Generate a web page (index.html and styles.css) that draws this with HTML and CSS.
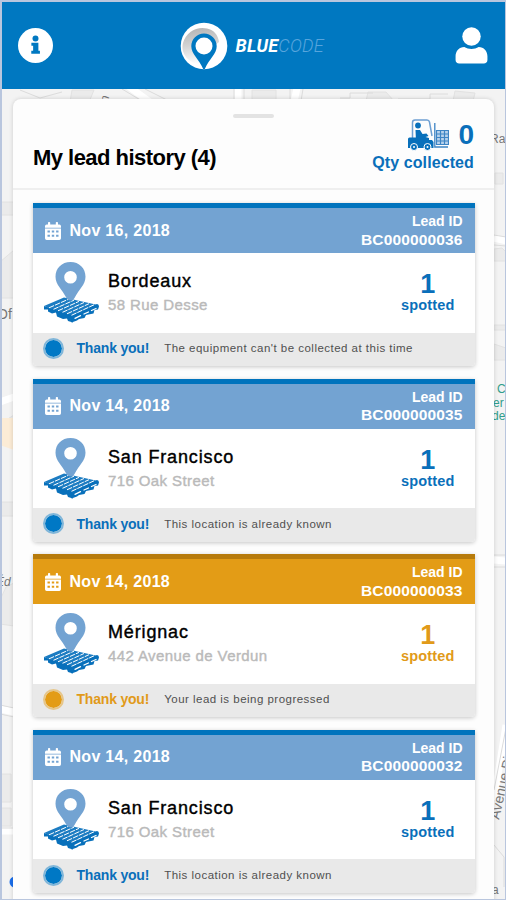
FILE: index.html
```html
<!DOCTYPE html>
<html lang="en">
<head>
<meta charset="utf-8">
<title>Bluecode</title>
<link rel="stylesheet" href="styles.css">
</head>
<body>
<svg class="defs" width="0" height="0" aria-hidden="true">
  <symbol id="calendar" viewBox="0 0 16 18">
    <path fill="currentColor" fill-rule="evenodd" d="M3 .8a.8.8 0 0 1 .8-.8h.6a.8.8 0 0 1 .8.8V2.500h5.600V.8a.8.8 0 0 1 .8-.8h.6a.8.8 0 0 1 .8.8V2.500h1.300a1.700 1.700 0 0 1 1.700 1.700V5.700H0V4.200a1.700 1.700 0 0 1 1.700-1.700H3zM0 6.600h16v9.700a1.700 1.700 0 0 1-1.700 1.700H1.700A1.700 1.700 0 0 1 0 16.300zM2.500 8.500v2.100h2.400V8.500zm4.300 0v2.100h2.400V8.500zm4.300 0v2.100h2.400V8.500zM2.500 12.700v2.100h2.400v-2.100zm4.300 0v2.100h2.400v-2.100zm4.300 0v2.100h2.400v-2.100z"/>
  </symbol>
  <symbol id="pallet" viewBox="0 0 56 62">
    <path fill="#1c7cc2" d="M0 45 20 36.500 54 44 29 56z"/>
    <path fill="#0870bb" d="M0 45 29 54.500V61.500L24 60 23 57.500 19 58 13 55.500 12 51.500 8 52.500 4 50.500 4 48.500 0 48.500z"/>
    <path fill="#0870bb" d="M28 55 53 43q2 0 2 2.500l-1 3-3.500.5-1 3.500-7.500 1.500-1.500 3-5.500 1-2 1.500-5.500 2z"/>
    <g fill="none" stroke="#fff" stroke-width="1" stroke-dasharray="5.500 1">
      <path d="M5 46.800 25 38M9.500 48.300 30 39.200M14 49.800 35 40.400M18.500 51.300 40 41.500M23 52.800 45 42.700M27.500 54.300 50 43.800"/>
    </g>
    <g fill="none" stroke="#fff" stroke-linecap="round" stroke-width="1.300">
      <path d="M31 57.300 36.500 54.700M40 53 44.500 51M47.500 49.500 52 47.500"/>
    </g>
    <path fill="#73a3d2" fill-rule="evenodd" d="M26.500 1c8.700 0 15 6.200 15 14.700 0 8-6.500 12.300-11 21.300q-1.200 2.500-4 2.500t-4-2.500c-4.500-9-11-13.300-11-21.300C11.500 7.200 17.800 1 26.500 1zm0 9a6.300 6.300 0 1 0 0 12.600 6.300 6.300 0 0 0 0-12.600z"/>
  </symbol>
</svg>

<div class="screen">
  <svg class="map" viewBox="0 0 506 900" aria-hidden="true">
    <rect width="506" height="900" fill="#f3f3f3"/>
    <g fill="#ebebeb" stroke="#e2e2e2">
      <path d="M72 90h22l-5 12H70zM252 90h24v12h-24zM368 92h18l8 9h-28zM455 91l20 2-2 8h-20z"/>
      <path d="M0 202h14v13H0zM0 262l14-12v48H0zM3 422l11-7v16H2zM0 502h14v14H0zM0 600l6-13 8-4v43l-14-2zM-4 774H11v28H-4zM-4 808h15v18H-4zM494 249l8-1 4 4v9h-12zM494 325h12v5h-12zM494 344l12 4v12h-12zM495 173h8v11h-8z"/>
    </g>
    <path fill="#fcecd6" d="M0 418h14v32l-14-5z"/>
    <g fill="none" stroke="#fff" stroke-width="7">
      <path d="M128 86 150 102M238 88v14M297 88l-3 14M0 402l14-5M0 709l14 3M0 831h14M494 238l12 3M494 560l12 1M494 800l12-75"/>
    </g>
    <g fill="none" stroke="#dcdcdc">
      <path d="M20 90l20 8 22-6M122 89l20 12M145 89l24 12M234 89v12M244 89v12M290 89v12M303 89l-2 12M340 98h10v-5h23M398 99h32v-5h18M494 235l12 2M494 245l12 1M494 555h12M494 567h12M0 705l14 3M0 714l14 3M0 828h14M494 790l12-62M494 845l10 12v30"/>
    </g>
    <g class="map-text">
      <text x="100" y="101" transform="rotate(-72 105 97)">n</text>
      <text x="-3" y="319" font-size="14">Of</text>
      <text x="-4" y="586" font-style="italic">Éd</text>
      <text x="490" y="143">Ra</text>
      <text x="499" y="820" font-size="14" transform="rotate(-77 499 820)">Avenue Pi</text>
      <text x="492" y="894">a</text>
      <g fill="#319d8b"><text x="497" y="393">C</text><text x="493" y="407">er</text><text x="492" y="420">de</text></g>
    </g>
    <circle cx="15" cy="882" r="5.500" fill="#1b6fec"/>
  </svg>

  <header class="topbar">
    <svg class="info" viewBox="0 0 34 34"><circle cx="17" cy="17" r="17" fill="#fff"/><circle cx="17" cy="10.200" r="2.900" fill="#0078c1"/><path fill="#0078c1" d="M13 14.300h6.800v7.700h1.500v3h-8.400v-3h1.800v-4.700H13z"/></svg>
    <div class="brand">
      <svg class="brand-mark" viewBox="0 0 48 48">
        <defs><linearGradient id="ring" x1=".25" y1="0" x2=".4" y2="1"><stop offset="0" stop-color="#b4b4b4"/><stop offset=".45" stop-color="#d2d2d2"/><stop offset="1" stop-color="#fff"/></linearGradient></defs>
        <circle cx="24" cy="24" r="23.300" fill="#fff"/>
        <path d="M3 21C6 10 17 4 27 6.500 34 8 38 13 39 20L24 32 20 42C10 42 0 32 3 21z" fill="url(#ring)"/>
        <path fill="#0078c1" d="M24 11.500c7 0 12.700 5.500 12.700 12.800C36.700 32 29 37 24.800 47h-1.600C19 37 11.300 32 11.300 24.300 11.300 17 17 11.500 24 11.500z"/>
        <circle cx="24" cy="24" r="8.500" fill="#fff"/>
      </svg>
      <span class="brand-name"><b>BLUE</b><span class="thin">CODE</span></span>
    </div>
    <svg class="user" viewBox="0 0 32 36"><circle cx="16" cy="9.300" r="9" fill="#fff"/><path fill="#fff" d="M9 19.500c4 2.500 10 2.500 14 0 5 0 8.500 4 8.500 9V32c0 2-1.500 3.500-3.500 3.500H4C2 35.500.5 34 .5 32v-3.500c0-5 3.500-9 8.500-9z"/></svg>
  </header>

  <main class="sheet">
    <div class="sheet-head">
      <div class="handle"></div>
      <h1>My lead history (4)</h1>
      <div class="collected">
        <div class="collected-row">
          <svg class="forklift" viewBox="0 0 42 32">
            <path fill="none" stroke="#6d9fd2" stroke-width="1.500" d="M5.500 19V3.500q0-2.500 2.500-2.500h12q2 0 2.500 2L25 17"/>
            <path fill="none" stroke="#3d84c4" stroke-width="1.300" d="M27.800 4v24H41"/>
            <path fill="#0870bb" d="M1 20q0-1.500 1.500-1.500H9l3 2.500h13l1.500 2v6H1z"/>
            <circle cx="11" cy="6.500" r="2.900" fill="#0870bb"/>
            <path fill="#0870bb" d="M8.500 11h4.500l2.500 4 4-.5 2 2.500-3 1 3.500 1v3.500H9z"/>
            <g fill="#0870bb" stroke="#fff"><circle cx="7" cy="28" r="3.500"/><circle cx="20.500" cy="28" r="3.500"/></g>
            <circle cx="7" cy="28" r="1" fill="#fff"/><circle cx="20.500" cy="28" r="1" fill="#fff"/>
            <path fill="#b7d2ec" d="M29 11h13v15H29z"/>
            <path fill="none" stroke="#3d84c4" stroke-width="1.200" d="M29 11.500h13M29 15h13M29 18.500h13M29 22h13M29 25.500h13M29.500 11v15M33.500 11v15M37.500 11v15M41.500 11v15"/>
          </svg>
          <strong>0</strong>
        </div>
        <div class="collected-label">Qty collected</div>
      </div>
    </div>

    <div class="list">
      <article class="card">
        <div class="card-head"><svg class="cal"><use href="#calendar"/></svg><time>Nov 16, 2018</time><div class="lead"><span>Lead ID</span><b>BC000000036</b></div></div>
        <div class="card-body"><svg class="pin"><use href="#pallet"/></svg><div class="place"><h2>Bordeaux</h2><p>58 Rue Desse</p></div><div class="count"><b>1</b><span>spotted</span></div></div>
        <div class="card-foot"><i class="dot"></i><b>Thank you!</b><span>The equipment can't be collected at this time</span></div>
      </article>
      <article class="card">
        <div class="card-head"><svg class="cal"><use href="#calendar"/></svg><time>Nov 14, 2018</time><div class="lead"><span>Lead ID</span><b>BC000000035</b></div></div>
        <div class="card-body"><svg class="pin"><use href="#pallet"/></svg><div class="place"><h2>San Francisco</h2><p>716 Oak Street</p></div><div class="count"><b>1</b><span>spotted</span></div></div>
        <div class="card-foot"><i class="dot"></i><b>Thank you!</b><span>This location is already known</span></div>
      </article>
      <article class="card pending">
        <div class="card-head"><svg class="cal"><use href="#calendar"/></svg><time>Nov 14, 2018</time><div class="lead"><span>Lead ID</span><b>BC000000033</b></div></div>
        <div class="card-body"><svg class="pin"><use href="#pallet"/></svg><div class="place"><h2>Mérignac</h2><p>442 Avenue de Verdun</p></div><div class="count"><b>1</b><span>spotted</span></div></div>
        <div class="card-foot"><i class="dot"></i><b>Thank you!</b><span>Your lead is being progressed</span></div>
      </article>
      <article class="card">
        <div class="card-head"><svg class="cal"><use href="#calendar"/></svg><time>Nov 14, 2018</time><div class="lead"><span>Lead ID</span><b>BC000000032</b></div></div>
        <div class="card-body"><svg class="pin"><use href="#pallet"/></svg><div class="place"><h2>San Francisco</h2><p>716 Oak Street</p></div><div class="count"><b>1</b><span>spotted</span></div></div>
        <div class="card-foot"><i class="dot"></i><b>Thank you!</b><span>This location is already known</span></div>
      </article>
    </div>
  </main>
</div>
</body>
</html>
```
FILE: styles.css
```css
* { box-sizing: border-box; }

body {
  margin: 0;
  font-family: "Liberation Sans", Arial, sans-serif;
}

h1, h2, p { margin: 0; }

.defs { position: absolute; }

.screen {
  position: relative;
  width: 506px;
  height: 900px;
  overflow: hidden;
  border: solid #b9c6de;
  border-width: 2px 1px 1px 2px;
}

.map {
  position: absolute;
  top: -2px;
  left: -2px;
  width: 506px;
  height: 900px;
}

.map-text {
  font-size: 12px;
  fill: #777;
}

.topbar {
  position: relative;
  display: flex;
  align-items: center;
  justify-content: space-between;
  height: 87px;
  padding: 0 17px 0 16px;
  background: #0078c1;
}

.info { width: 35px; height: 35px; }

.user { width: 33px; height: 37px; }

.brand {
  display: flex;
  align-items: center;
  gap: 8px;
  margin-left: -2px;
}

.brand-mark { width: 48px; height: 48px; }

.brand-name {
  width: 91px;
  font: italic 18px/24px Roboto, sans-serif;
  letter-spacing: 0.3px;
  color: #fff;
  white-space: nowrap;
}

.thin {
  font-weight: 300;
  color: #58a5dc;
}

.sheet {
  position: relative;
  width: 481px;
  height: 810px;
  margin: 10px 0 0 11px;
  border-radius: 8px;
  background: #fdfdfd;
  box-shadow: 0 0 4px rgba(0, 0, 0, 0.16);
}

.sheet-head {
  display: grid;
  grid-template-columns: 1fr auto;
  grid-template-rows: 19px 72px;
  height: 91px;
  padding: 0 20px;
  border-bottom: 2px solid #efefef;
}

.handle {
  grid-column: 1 / -1;
  justify-self: center;
  align-self: end;
  width: 41px;
  height: 4px;
  border-radius: 2px;
  background: #e3e3e3;
}

h1 {
  padding-top: 27px;
  font-size: 22px;
  line-height: 26px;
  letter-spacing: -0.53px;
}

.collected { color: #0a6fba; }

.collected-row {
  display: flex;
  justify-content: flex-end;
  align-items: center;
  gap: 9px;
  height: 33px;
}

.forklift { width: 42px; height: 32px; }

.collected-row strong {
  font-size: 28px;
  line-height: 32px;
}

.collected-label {
  margin-top: 2px;
  font-size: 16px;
  font-weight: bold;
  line-height: 20px;
  letter-spacing: 0.1px;
}

.list {
  display: flex;
  flex-direction: column;
  gap: 12.6px;
  padding: 13px 19.5px 0;
}

.card {
  --accent: #0a6fba;
  --head: #73a3d2;
  --stripe: #0073bd;
  --dot: #0078c5;
  flex: none;
  height: 163px;
  overflow: hidden;
  border-radius: 0 0 4px 4px;
  background: #fff;
  box-shadow: 0 1px 4px rgba(0, 0, 0, 0.22);
}

.pending {
  --accent: #e19a19;
  --head: #e39c16;
  --stripe: #b77b0c;
  --dot: #e39c16;
}

.card-head {
  display: flex;
  align-items: center;
  height: 50px;
  padding: 0 12px;
  border-top: 5px solid var(--stripe);
  background: var(--head);
  color: #fff;
}

.cal { width: 16px; height: 18px; }

time {
  margin-left: 9px;
  font-size: 16px;
  font-weight: bold;
  letter-spacing: 0.3px;
}

.lead {
  display: flex;
  flex-direction: column;
  align-items: flex-end;
  margin: 0 0 0 auto;
  line-height: 17.5px;
}

.lead span { font-size: 14px; font-weight: bold; }

.lead b { font-size: 15.5px; letter-spacing: 0.14px; }

.card-body {
  display: flex;
  height: 79.5px;
  padding: 8px 20px 0 11.5px;
}

.pin { width: 56px; height: 62px; }

.place { padding: 9px 0 0 8px; }

h2 {
  font-size: 18px;
  font-weight: normal;
  line-height: 22px;
  letter-spacing: 0.85px;
  -webkit-text-stroke: 0.4px #000;
}

.place p {
  margin-top: 3px;
  font-size: 15px;
  line-height: 20px;
  letter-spacing: 0.4px;
  color: #bababa;
  -webkit-text-stroke: 0.4px #bababa;
}

.count {
  display: flex;
  flex-direction: column;
  align-items: center;
  margin-left: auto;
  padding-top: 10px;
  color: var(--accent);
}

.count b { font-size: 27px; line-height: 26px; }

.count span {
  font-size: 14.5px;
  font-weight: bold;
  line-height: 16px;
  letter-spacing: 0.15px;
}

.card-foot {
  display: flex;
  align-items: center;
  height: 33.5px;
  padding: 0 0 2px 10px;
  background: #e9e9e9;
}

.dot {
  width: 21px;
  height: 21px;
  border: 2px solid color-mix(in srgb, var(--dot) 45%, #e9e9e9);
  border-radius: 50%;
  background: var(--dot);
  background-clip: padding-box;
}

.card-foot b {
  margin-left: 13px;
  font-size: 14px;
  letter-spacing: -0.2px;
  color: var(--accent);
}

.card-foot span {
  margin-left: 15px;
  font-size: 11.5px;
  letter-spacing: 0.48px;
  color: #505050;
}
```
